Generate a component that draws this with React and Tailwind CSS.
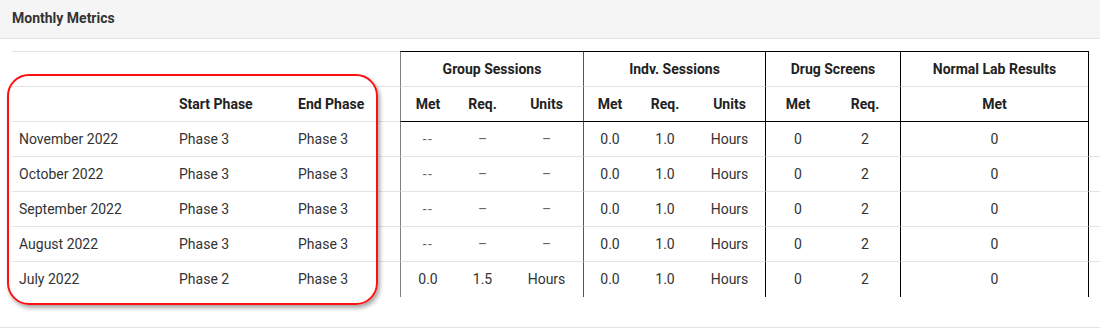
const ROWS = [
  { month: 'November 2022', start: 'Phase 3', end: 'Phase 3', g: ['--', '–', '–'], i: ['0.0', '1.0', 'Hours'], d: ['0', '2'], lab: '0' },
  { month: 'October 2022', start: 'Phase 3', end: 'Phase 3', g: ['--', '–', '–'], i: ['0.0', '1.0', 'Hours'], d: ['0', '2'], lab: '0' },
  { month: 'September 2022', start: 'Phase 3', end: 'Phase 3', g: ['--', '–', '–'], i: ['0.0', '1.0', 'Hours'], d: ['0', '2'], lab: '0' },
  { month: 'August 2022', start: 'Phase 3', end: 'Phase 3', g: ['--', '–', '–'], i: ['0.0', '1.0', 'Hours'], d: ['0', '2'], lab: '0' },
  { month: 'July 2022', start: 'Phase 2', end: 'Phase 3', g: ['0.0', '1.5', 'Hours'], i: ['0.0', '1.0', 'Hours'], d: ['0', '2'], lab: '0' },
]

const cell = 'flex items-center h-[35px] text-[14px]'

export default function App() {
  return (
    <div className="relative w-[1100px] h-[328px] bg-white text-[#333] font-['Roboto','Liberation_Sans',sans-serif] border-b border-[#e3e3e3]">
      <div className="h-[39px] bg-[#f5f5f5] border-b border-[#e3e3e3] flex items-center px-3 pb-px">
        <h2 className="text-[14px] font-bold text-[#333]">Monthly Metrics</h2>
      </div>

      <div className="pt-3 pl-3">
        <div className="grid grid-cols-[159px_119px_110px_55px_55px_73px_53px_58px_71px_65px_70px_188px_12px]">
          {/* group header row */}
          <div className="col-span-3 h-[36px] border-t border-b border-[#e3e3e3]" />
          <div className="col-span-3 h-[36px] flex items-center justify-center text-[14px] font-bold text-[#222] border-t border-t-black border-b border-b-[#e3e3e3] border-l border-l-[#808080]">Group Sessions</div>
          <div className="col-span-3 h-[36px] flex items-center justify-center text-[14px] font-bold text-[#222] border-t border-t-black border-b border-b-[#e3e3e3] border-l border-l-[#555]">Indv. Sessions</div>
          <div className="col-span-2 h-[36px] flex items-center justify-center text-[14px] font-bold text-[#222] border-t border-t-black border-b border-b-[#e3e3e3] border-l border-l-black">Drug Screens</div>
          <div className="h-[36px] flex items-center justify-center text-[14px] font-bold text-[#222] border-t border-t-black border-b border-b-[#e3e3e3] border-l border-l-black">Normal Lab Results</div>
          <div className="h-[36px] border-l border-black" />

          {/* column header row */}
          <div className={`${cell} pl-[7px] border-b border-[#e3e3e3]`} />
          <div className={`${cell} pl-2 font-bold text-[#222] border-b border-[#e3e3e3]`}>Start Phase</div>
          <div className={`${cell} pl-2 font-bold text-[#222] border-b border-[#e3e3e3]`}>End Phase</div>
          <div className={`${cell} justify-center font-bold text-[#222] border-b border-black border-l border-l-[#808080]`}>Met</div>
          <div className={`${cell} justify-center font-bold text-[#222] border-b border-black`}>Req.</div>
          <div className={`${cell} justify-center font-bold text-[#222] border-b border-black`}>Units</div>
          <div className={`${cell} justify-center font-bold text-[#222] border-b border-black border-l border-l-[#555]`}>Met</div>
          <div className={`${cell} justify-center font-bold text-[#222] border-b border-black`}>Req.</div>
          <div className={`${cell} justify-center font-bold text-[#222] border-b border-black`}>Units</div>
          <div className={`${cell} justify-center font-bold text-[#222] border-b border-black border-l border-l-black`}>Met</div>
          <div className={`${cell} justify-center font-bold text-[#222] border-b border-black`}>Req.</div>
          <div className={`${cell} justify-center font-bold text-[#222] border-b border-black border-l border-l-black`}>Met</div>
          <div className={`${cell} border-l border-black`} />

          {ROWS.map((r, idx) => {
            const b = idx < ROWS.length - 1 ? 'border-b border-b-[#e3e3e3]' : ''
            const dash = (v) => (v === '--' ? 'text-[#666] tracking-[1.5px]' : v === '–' ? 'text-[#666]' : '')
            return [
              <div key={`${idx}-m`} className={`${cell} pl-[7px] ${b}`}>{r.month}</div>,
              <div key={`${idx}-s`} className={`${cell} pl-2 ${b}`}>{r.start}</div>,
              <div key={`${idx}-e`} className={`${cell} pl-2 ${b}`}>{r.end}</div>,
              <div key={`${idx}-g0`} className={`${cell} justify-center border-l border-l-[#808080] ${b} ${dash(r.g[0])}`}>{r.g[0]}</div>,
              <div key={`${idx}-g1`} className={`${cell} justify-center ${b} ${dash(r.g[1])}`}>{r.g[1]}</div>,
              <div key={`${idx}-g2`} className={`${cell} justify-center ${b} ${dash(r.g[2])}`}>{r.g[2]}</div>,
              <div key={`${idx}-i0`} className={`${cell} justify-center border-l border-l-[#555] ${b}`}>{r.i[0]}</div>,
              <div key={`${idx}-i1`} className={`${cell} justify-center ${b}`}>{r.i[1]}</div>,
              <div key={`${idx}-i2`} className={`${cell} justify-center ${b}`}>{r.i[2]}</div>,
              <div key={`${idx}-d0`} className={`${cell} justify-center border-l border-l-black ${b}`}>{r.d[0]}</div>,
              <div key={`${idx}-d1`} className={`${cell} justify-center ${b}`}>{r.d[1]}</div>,
              <div key={`${idx}-l`} className={`${cell} justify-center border-l border-l-black ${b}`}>{r.lab}</div>,
              <div key={`${idx}-x`} className={`${cell} border-l border-l-black ${b}`} />,
            ]
          })}
        </div>
      </div>

      {/* red highlight annotation */}
      <div className="absolute left-[7px] top-[74px] w-[371px] h-[231px] border-2 border-[#ff1010] rounded-[22px] shadow-[2px_3px_4px_rgba(0,0,0,0.35)] pointer-events-none" />
    </div>
  )
}
